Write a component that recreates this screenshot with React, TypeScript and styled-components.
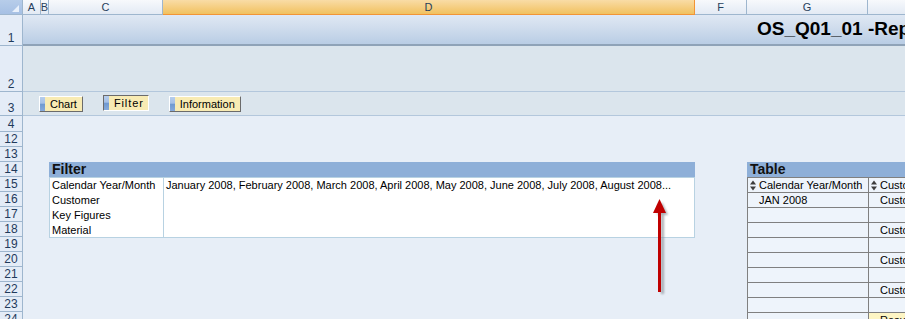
import React from "react";
import styled, { createGlobalStyle } from "styled-components";

const GlobalStyle = createGlobalStyle`
  html, body {
    margin: 0;
    padding: 0;
    background: #e7eef7;
    overflow: hidden;
  }
  body {
    font-family: "Liberation Sans", Arial, sans-serif;
    font-size: 11px;
    color: #000;
  }
`;

const columns = [
  { name: "A", width: 18 },
  { name: "B", width: 8 },
  { name: "C", width: 114 },
  { name: "D", width: 532, selected: true },
  { name: "F", width: 52 },
  { name: "G", width: 121 },
  { name: "", width: 60 },
];

const rows = [
  { label: "1", height: 31 },
  { label: "2", height: 46 },
  { label: "3", height: 24 },
  { label: "4", height: 16 },
  ...[12, 13, 14, 15, 16, 17, 18, 19, 20, 21, 22, 23, 24].map((n) => ({
    label: String(n),
    height: 15,
  })),
];

const filterRows = [
  {
    label: "Calendar Year/Month",
    value:
      "January 2008, February 2008, March 2008, April 2008, May 2008, June 2008, July 2008, August 2008...",
  },
  { label: "Customer", value: "" },
  { label: "Key Figures", value: "" },
  { label: "Material", value: "" },
];

const tableRows = [
  { a: "JAN 2008", b: "Custo" },
  { a: "", b: "" },
  { a: "", b: "Custo" },
  { a: "", b: "" },
  { a: "", b: "Custo" },
  { a: "", b: "" },
  { a: "", b: "Custo" },
  { a: "", b: "" },
  { a: "", b: "Resu", result: true },
];

export default function App() {
  return (
    <Sheet>
      <GlobalStyle />
      <ColumnBar>
        <Corner>
          <CornerMark />
        </Corner>
        {columns.map((c, i) => (
          <ColHead key={i} $w={c.width} $selected={!!c.selected}>
            {c.name}
          </ColHead>
        ))}
      </ColumnBar>
      <Body>
        <RowHeads>
          {rows.map((r) => (
            <RowHead key={r.label} $h={r.height}>
              {r.label}
            </RowHead>
          ))}
        </RowHeads>
        <Canvas>
          <TitleBand>
            <Title>OS_Q01_01 -Report</Title>
          </TitleBand>
          <Band $h={46} />
          <ButtonBand>
            <TabButton>
              <Strip />
              Chart
            </TabButton>
            <TabButton $pressed $spaced>
              <Strip />
              Filter
            </TabButton>
            <TabButton>
              <Strip />
              Information
            </TabButton>
          </ButtonBand>
          <Work>
            <FilterPanel>
              <PanelHeader>Filter</PanelHeader>
              <FilterBody>
                <FilterLabels>
                  {filterRows.map((r) => (
                    <FilterCell key={r.label}>{r.label}</FilterCell>
                  ))}
                </FilterLabels>
                <FilterValues>
                  {filterRows.map((r) => (
                    <FilterCell key={r.label}>{r.value}</FilterCell>
                  ))}
                </FilterValues>
              </FilterBody>
            </FilterPanel>
            <TablePanel>
              <PanelHeader>Table</PanelHeader>
              <Grid>
                <GridRow>
                  <GridCell $w={121}>
                    <SortIcon />
                    Calendar Year/Month
                  </GridCell>
                  <GridCell $w={60}>
                    <SortIcon />
                    Customer
                  </GridCell>
                </GridRow>
                {tableRows.map((r, i) => (
                  <GridRow key={i}>
                    <GridCell $w={121} $indent>
                      {r.a}
                    </GridCell>
                    <GridCell $w={60} $indent $result={!!r.result}>
                      {r.b}
                    </GridCell>
                  </GridRow>
                ))}
              </Grid>
            </TablePanel>
            <Arrow width="24" height="100" viewBox="0 0 24 100">
              <defs>
                <filter id="shadow" x="-50%" y="-20%" width="200%" height="140%">
                  <feGaussianBlur stdDeviation="1.3" />
                </filter>
              </defs>
              <g filter="url(#shadow)" fill="#8a8f96" opacity="0.7">
                <rect x="11" y="16" width="3" height="82" />
                <polygon points="7,19 12,6 18,19" />
              </g>
              <rect x="8" y="14" width="3" height="82" fill="#c00000" />
              <polygon points="3,17 9.5,3 16,17" fill="#c00000" />
            </Arrow>
          </Work>
        </Canvas>
      </Body>
    </Sheet>
  );
}

function SortIcon() {
  return (
    <SortSvg width="6" height="11" viewBox="0 0 6 11">
      <polygon points="0,4.5 3,0.5 6,4.5" fill="#3d3d3d" />
      <polygon points="0,6.5 3,10.5 6,6.5" fill="#3d3d3d" />
    </SortSvg>
  );
}

const Sheet = styled.div`
  width: 905px;
  height: 319px;
  overflow: hidden;
  display: flex;
  flex-direction: column;
  background: #e7eef7;
`;

const ColumnBar = styled.div`
  display: flex;
  height: 15px;
  flex: none;
  overflow: hidden;
`;

const Corner = styled.div`
  position: relative;
  flex: none;
  width: 23px;
  height: 15px;
  box-sizing: border-box;
  background: linear-gradient(#b7cdea, #a6c0e4);
  border-right: 1px solid #9eb6ce;
  border-bottom: 1px solid #9eb6ce;
`;

const CornerMark = styled.div`
  position: absolute;
  right: 3px;
  bottom: 2px;
  width: 0;
  height: 0;
  border-left: 7px solid transparent;
  border-bottom: 7px solid #e8f0fb;
`;

const ColHead = styled.div<{ $w: number; $selected: boolean }>`
  flex: none;
  width: ${(p) => p.$w}px;
  height: 15px;
  box-sizing: border-box;
  display: flex;
  align-items: center;
  justify-content: center;
  font-size: 11px;
  color: #27405c;
  background: ${(p) =>
    p.$selected
      ? "linear-gradient(#f9dca6, #f1c15f)"
      : "linear-gradient(#f7f9fc, #e3eaf4)"};
  border-right: 1px solid ${(p) => (p.$selected ? "#f29436" : "#9eb6ce")};
  border-bottom: 1px solid ${(p) => (p.$selected ? "#f29436" : "#9eb6ce")};
`;

const Body = styled.div`
  display: flex;
  flex: 1;
  min-height: 0;
`;

const RowHeads = styled.div`
  width: 23px;
  flex: none;
  display: flex;
  flex-direction: column;
`;

const RowHead = styled.div<{ $h: number }>`
  flex: none;
  height: ${(p) => p.$h}px;
  box-sizing: border-box;
  display: flex;
  align-items: flex-end;
  justify-content: center;
  line-height: 14px;
  font-size: 12px;
  color: #1f3a5c;
  background: #e4ecf7;
  border-right: 1px solid #9eb6ce;
  border-bottom: 1px solid #9eb6ce;
`;

const Canvas = styled.div`
  flex: 1;
  min-width: 0;
  display: flex;
  flex-direction: column;
`;

const TitleBand = styled.div`
  height: 31px;
  flex: none;
  box-sizing: border-box;
  display: flex;
  align-items: flex-end;
  padding-left: 734px;
  padding-bottom: 5px;
  overflow: hidden;
  background: linear-gradient(#dfe8f4 0%, #d3dfee 35%, #b9cde5 100%);
  border-bottom: 2px solid #8fa3b8;
`;

const Title = styled.div`
  font-size: 19px;
  font-weight: bold;
  white-space: nowrap;
  line-height: 20px;
  color: #000;
`;

const Band = styled.div<{ $h: number }>`
  height: ${(p) => p.$h}px;
  flex: none;
  box-sizing: border-box;
  background: #dbe5ed;
  border-bottom: 1px solid #b3c7dc;
`;

const ButtonBand = styled.div`
  height: 24px;
  flex: none;
  box-sizing: border-box;
  display: flex;
  align-items: center;
  padding-left: 16px;
  background: #dbe5ed;
  border-bottom: 1px solid #b3c7dc;
`;

const TabButton = styled.div<{ $pressed?: boolean; $spaced?: boolean }>`
  flex: none;
  display: flex;
  align-items: center;
  height: 16px;
  box-sizing: border-box;
  margin-right: 20px;
  margin-top: ${(p) => (p.$pressed ? "-2px" : "1px")};
  padding-right: ${(p) => (p.$spaced ? "4px" : "5px")};
  background: #f8ebb3;
  font-size: 11px;
  letter-spacing: ${(p) => (p.$spaced ? "0.9px" : "0")};
  color: #000;
  border-style: solid;
  border-width: 1px;
  border-color: ${(p) =>
    p.$pressed
      ? "#6b6b6b #ffffff #ffffff #6b6b6b"
      : "#ffffff #6b6b6b #6b6b6b #ffffff"};
`;

const Strip = styled.div`
  align-self: stretch;
  width: 5px;
  margin-right: 5px;
  background: linear-gradient(#b6cdec 0%, #a5c0e6 45%, #6f99d0 50%, #86aadb 100%);
`;

const Work = styled.div`
  position: relative;
  flex: 1;
  display: flex;
  align-items: flex-start;
  padding-top: 46px;
  padding-left: 26px;
  gap: 52px;
  background: #e7eef7;
`;

const FilterPanel = styled.div`
  width: 646px;
  flex: none;
`;

const PanelHeader = styled.div`
  height: 15px;
  box-sizing: border-box;
  padding-left: 3px;
  font-size: 14px;
  font-weight: bold;
  line-height: 15px;
  color: #111;
  background: #8eafd8;
`;

const FilterBody = styled.div`
  display: flex;
  background: #fff;
  border: 1px solid #b8d2e2;
  box-sizing: border-box;
  height: 61px;
`;

const FilterLabels = styled.div`
  width: 113px;
  flex: none;
  border-right: 1px solid #b8d2e2;
`;

const FilterValues = styled.div`
  flex: 1;
  min-width: 0;
`;

const FilterCell = styled.div`
  height: 15px;
  line-height: 14px;
  padding-left: 2px;
  white-space: nowrap;
  font-size: 11px;
  color: #000;
`;

const TablePanel = styled.div`
  flex: none;
  width: 200px;
`;

const Grid = styled.div`
  display: flex;
  flex-direction: column;
  background: #eef4fb;
`;

const GridRow = styled.div`
  display: flex;
  height: 15px;
`;

const GridCell = styled.div<{ $w: number; $indent?: boolean; $result?: boolean }>`
  flex: none;
  width: ${(p) => p.$w}px;
  height: 15px;
  box-sizing: border-box;
  display: flex;
  align-items: center;
  overflow: hidden;
  white-space: nowrap;
  padding-left: ${(p) => (p.$indent ? "11px" : "2px")};
  font-size: 11px;
  color: #000;
  background: ${(p) => (p.$result ? "#fdf5c4" : "transparent")};
  border-top: 1px solid #808080;
  border-left: 1px solid #808080;
`;

const SortSvg = styled.svg`
  flex: none;
  margin-right: 3px;
`;

const Arrow = styled.svg`
  position: absolute;
  left: 627px;
  top: 80px;
`;
